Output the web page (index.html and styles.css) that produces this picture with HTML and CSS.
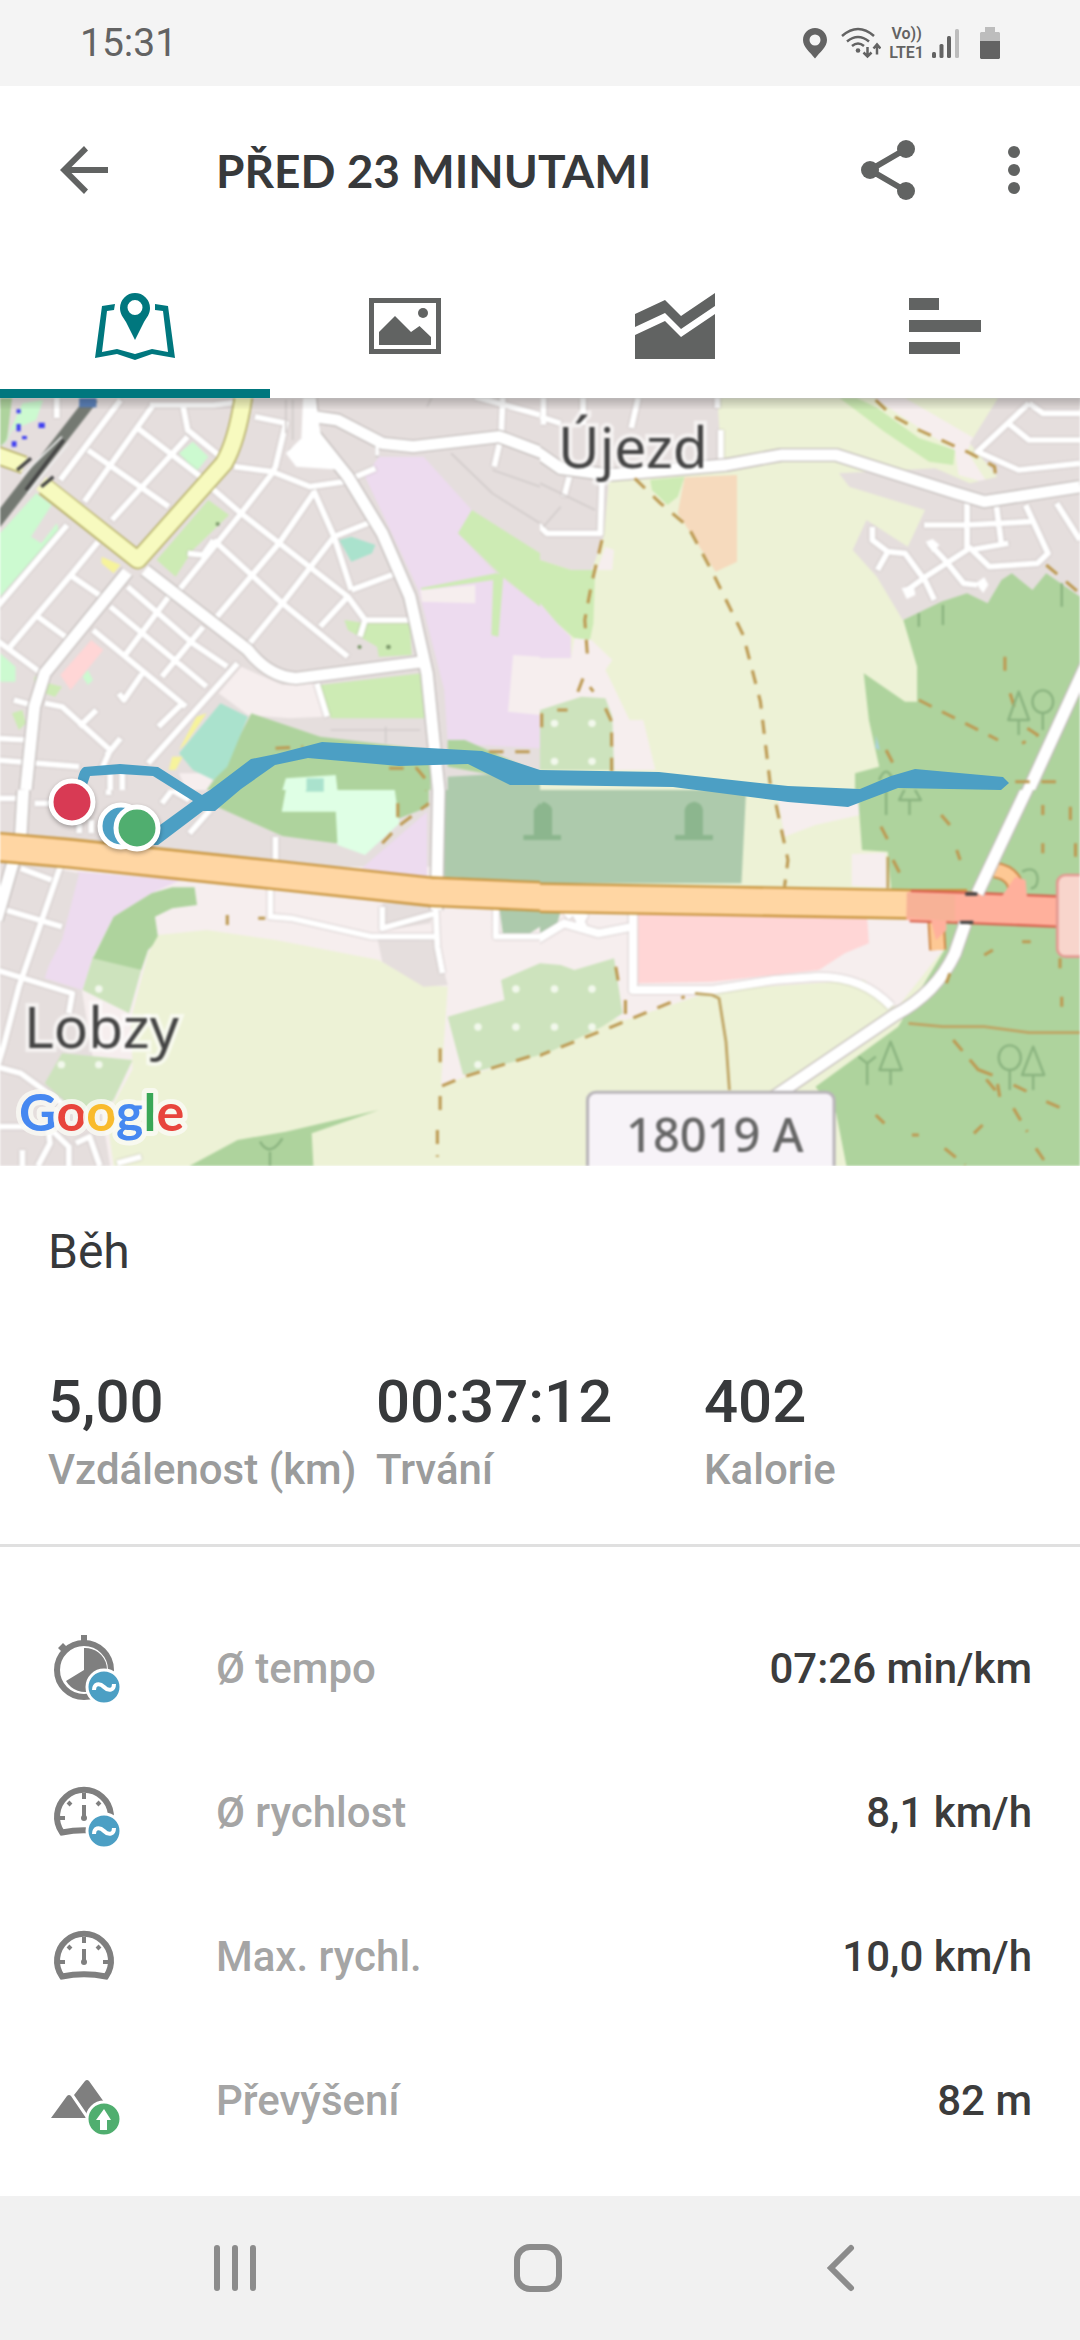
FILE: index.html
```html
<!DOCTYPE html>
<html lang="cs">
<head>
  <meta charset="utf-8">
  <meta name="viewport" content="width=device-width, initial-scale=1">
  <title>Před 23 minutami</title>
  <link rel="stylesheet" href="styles.css">
</head>
<body>
  <div class="status-bar">
    <span class="clock">15:31</span>
    <div class="status-icons">
      <svg width="24" height="32" viewBox="0 0 24 32"><path fill-rule="evenodd" d="M12 1C5.400 1 0 6 0 13c0 7 7 12 12 18.500C17 25 24 20 24 13 24 6 18.600 1 12 1zm0 6.500a5.500 5.500 0 1 1 0 11 5.500 5.500 0 0 1 0-11z"/></svg>
      <svg class="wifi" width="40" height="32" viewBox="0 0 40 32">
        <g class="line"><path d="M1 9Q17-5 33 9M6 14.500q11-9 22 0M11 19q6-5 12 0"/><path d="M26.500 20v9M22.500 25.500l4 4 4-4M36 27.500v-9M32.500 21.500l3.500-4 3.500 4"/></g>
        <circle cx="17" cy="23.500" r="2.300"/>
      </svg>
      <span class="network"><span>Vo))</span><span>LTE1</span></span>
      <svg width="28" height="32" viewBox="0 0 28 32"><rect y="25" width="4" height="6" rx="1.500"/><rect x="7.500" y="17" width="4" height="14" rx="1.500"/><rect x="15" y="9" width="4" height="22" rx="1.500"/><rect class="faint" x="23" y="2" width="4" height="29" rx="1.500"/></svg>
      <svg class="battery" width="20" height="32" viewBox="0 0 20 32"><path class="faint" d="M5 0h10v5h4l1 1v9H0V6l1-1h4z"/><path d="M0 14h20v17l-1 1H1l-1-1z"/></svg>
    </div>
  </div>

  <header class="app-bar">
    <button class="icon-button" aria-label="Zpět">
      <svg width="48" height="48" viewBox="0 0 48 48"><path d="M48 21H11.500L28 4.500 24 0 0 24l24 24 4-4.500L11.500 27H48z"/></svg>
    </button>
    <h1>PŘED 23 MINUTAMI</h1>
    <button class="icon-button" aria-label="Sdílet">
      <svg width="54" height="60" viewBox="0 0 54 60"><path class="share-line" d="M45 9L9 30l36 21"/><circle cx="45" cy="9" r="9"/><circle cx="9" cy="30" r="9"/><circle cx="45" cy="51" r="9"/></svg>
    </button>
    <button class="icon-button more" aria-label="Další možnosti">
      <svg width="12" height="48" viewBox="0 0 12 48"><circle cx="6" cy="6" r="6"/><circle cx="6" cy="24" r="6"/><circle cx="6" cy="42" r="6"/></svg>
    </button>
  </header>

  <nav class="tabs">
    <button class="tab active" aria-label="Mapa">
      <svg width="80" height="72" viewBox="0 0 80 72"><path d="M7 16l13-2-1 6-7 1-5 41 15-3 18 5 17-5 16 3-5-41-8-1v-6l13 2 7 52-23-4-17 6-18-6-22 4z"/><path fill-rule="evenodd" d="M40 3a15 15 0 0 0-15 15c0 6 3 9 6 14l9 18 9-18c3-5 6-8 6-14A15 15 0 0 0 40 3zm0 7a7.500 7.500 0 1 1 0 15 7.500 7.500 0 0 1 0-15z"/></svg>
    </button>
    <button class="tab" aria-label="Fotografie">
      <svg width="80" height="72" viewBox="0 0 80 72"><path fill-rule="evenodd" d="M4 8h72v56H4zm5 5v46h62V13z"/><path d="M14 42l16-16 16 16 8.500-6L66 47v8H14z"/><circle cx="58" cy="23" r="5"/></svg>
    </button>
    <button class="tab" aria-label="Grafy">
      <svg width="80" height="72" viewBox="0 0 80 72"><path d="M0 24l30-14 16 16L80 3v13L46 39 30 23 0 37zM0 45l30-14 16 16 34-23v45H0z"/></svg>
    </button>
    <button class="tab" aria-label="Mezičasy">
      <svg width="80" height="72" viewBox="0 0 80 72"><path d="M4 8h30v12H4zM4 30h72v12H4zM4 52h51v12H4z"/></svg>
    </button>
  </nav>

  <main>
    <div class="map">
      <svg class="map-canvas" viewBox="0 0 1080 768" role="img" aria-label="Mapa trasy">
        <defs>
          <linearGradient id="edge-shadow" x2="0" y2="1"><stop stop-color="#000" stop-opacity=".22"/><stop offset="1" stop-color="#000" stop-opacity="0"/></linearGradient>
        </defs>
        <g class="tiles">
          <!-- north west -->
          <svg x="0" y="0" width="540" height="392" viewBox="0 24 1568 1176" preserveAspectRatio="none">
            <rect class="urban" y="24" width="1568" height="1176"/>
            <path class="forest" d="M0 24h35L20 150 0 170z"/>
            <path class="park" d="M35 120l70-30 20-60-60 10-60 140zM0 430l105-120 45 35-60 95 30 20 45-60 5 20L0 620zM520 190l40-35 45 45-35 45zM0 790l45 40v45H0zM240 860l15-20 15 30-15 15z"/>
            <path class="meadow" d="M455 510l150-180 60 45-65 65-40 40-50 80zM1000 690l60 10 130 0 5 95-95 5-5-30-85-50zM930 885l295-35 7 135-270 0-32-55zM100 860l50-10-10 30 40 10-20 30-60-20zM35 970l30-10 10 40-20 20z"/>
            <path class="industry" d="M1060 260l40-60h130l140 160-40 70 110 120 128 100v425l-268-15-10-160-75-300z"/>
            <path class="meadow" d="M1370 360l198 130v160l-108-90-130-130zM1220 595l220-45 22 5-15 185-20-5 5-165-205 30z"/>
            <path class="pale" d="M1220 600l160-15v55l-155-5zM1490 795l78 5v175l-93-10zM700 830l120 55 90-5 20 60 10 40-100 5-120-10-85-65zM520 1150h110l-30 50h-60z"/>
            <path class="retail" d="M265 750l35 30-95 120-30-45z"/>
            <path class="forest" d="M730 970l200 70 320 40v120H600l50-70zM1300 1050h50l218 100v30l-268-50z"/>
            <path class="sport" d="M640 940l80 40-60 150-40 40-60-30-40-50zM985 450l35-10 70 25-10 25-60 25z"/>
            <path class="yellow" d="M295 500l55 25-20 25-35-30zM570 980l30-10-60 90-20 20zM500 1100l30 0-20 40-20 0z"/>
            <path class="cemetery" d="M1300 1160l268-15v55h-268z"/>
            <path class="pitch" d="M830 1165l145-10 5 45H820z"/><path class="sport" d="M890 1165h50v35h-50z"/>
            <path class="rail" d="M270 24L-20 410"/>
            <g id="nw-minor" class="ways"><path d="M-20 665l215-260M175 270L350 30M30 770l180-220 75-95M245 335L445 45M255 180l235 170M400 115l220 175M700 370l310 250 50 70h130M325 390l220-250M530 40l15 80 95 80M435 45h185l80-10M740 80l90 20-30 130-10 20-90 120-180 230M610 290l90 80M910 310L810 460 630 680M970 440L820 640l-95 120M1010 620l-80 90M680 230l110 15 110 45 100-15 90-40M910 300l60 140 50 160M970 440l110-45M1020 600l130-50M620 450l200 190 190 160M545 490l45 5 30-45M210 560l85 60M370 590l190 170 100 70M490 620L360 800M590 710L470 860M320 650l280 240M270 720l270 230M110 680l80 60M-10 750l130 100M690 820L430 1120M420 840l-60 90-15-20M530 940l-70 70M130 940l50 10 140 130-30 70M280 960l-50 50M350 1045l-40 50M-10 1110l240 20M-10 1045l90 5M40 930l70 20M1060 690l-15 50M1460 20l-5 120-20 90M1380 20l188 55M165 24v60M920 880l30 100M320 1130v70M355 1140v60"/></g>
            <use class="minor" href="#nw-minor"/>
            <g id="nw-major" class="ways"><path d="M370 545L130 850l-30 100-25 250M420 540l300 240q60 80 140 85l370-50M900 10l10 120 100 130 100 170 80 190 50 230 35 360M910 80l70 10 130 70 90 10 250-30 128 50M1090 180h10M850 195l60-40"/></g>
            <use class="casing" href="#nw-major"/><use class="major" href="#nw-major"/>
            <path class="plaza" d="M830 190l60-60 50 20 60 90-140-10zM880 24h35l20 130-60-10z"/>
            <path class="path-grey" d="M1310 190l120 120 138 90M1430 240l138 50M960 1020h260M1120 1010v50M850 30v120M830 30v100M1240 50l15-30"/>
            <path class="yellow-case" d="M-10 195l80 30M130 290l270 220L650 220q40-70 60-220"/>
            <path class="yellow-road" d="M-10 195l80 30M120 280l280 230L650 220q40-70 60-220"/>
            <path class="bridge" d="M50 240l40-35M120 290l35-30M75 300L185 150"/><path class="bridge-line" d="M60 260L180 140M80 310L200 160"/>
            <path class="blue" d="M48 58h12v12H48zM48 102h12v22H48zM112 98h18v16h-18zM34 154h14v16H34zM64 138h14v10H64z"/>
            <path class="stop" d="M230 24h50v28h-50z"/>
            <path class="dash" d="M800 1075l80-5M1130 1135h80l40 50M1420 1085h148"/>
            <g class="tree-dot"><circle cx="632" cy="402" r="6"/><circle cx="1128" cy="771" r="7"/><circle cx="1044" cy="771" r="6"/></g>
          </svg>

          <!-- north east -->
          <svg x="540" y="0" width="540" height="392" viewBox="0 24 1568 1176" preserveAspectRatio="none">
            <rect class="field" y="24" width="1568" height="1176"/>
            <path class="urban" d="M0 24h515l10 166 15 40-340 40-15 170-35 100H90L0 510z"/>
            <path class="meadow" d="M0 510l90 30h70l-5 160-10 50-45-5-50-45-50-60zM320 270l100-10-20 60-30 25-45-45zM870 24h50l60 30 120 90 105 36-5 45-70-10-130-90z"/>
            <path class="industry" d="M0 640l50 60 40 40v65H0z"/>
            <path class="pale" d="M0 805h90l10-60 50 5 60 60-20 30 10 20 60 130h40l35 150H0zM165 540l25-70 25 10-5 60zM970 24h90l200 120-20 40 60 96-85-25-10-75-80-50z"/>
            <path class="orchard" d="M0 960l120-40 70 5 20 55 5 160H0z"/>
            <path class="farm" d="M420 262l152-7v260l-62 30-110-175z"/>
            <path class="urban" d="M1330 24h238v600l-100-65-40 45-60-50-70 90-60-30-185 76-75-130-70-80 40-90 120 80 50-110-220-70-30-40 280-15 100 45 80-20-80-100z"/>
            <path class="forest" d="M1055 690l110-55 75-25 60 30 40-70 30-20 60 50 40-50 98 70v580H915v-50l70-20-30-140-15-140 120 85h35V830z"/>
            <path class="water" d="M975 1035l12 45-12-5z"/>
            <g id="ne-minor" class="ways"><path d="M10 24v80M0 80l60 20M125 24v80M285 24l-20 90M515 24v30M525 120v90M85 260l-15 60M180 270l-5 160H20l-30-30M965 410v40l45 35 50 5 60 85 25 55M1010 485l-30 55M1130 460l50 55 50 65 40 5M1240 340v140l-120 80-60 45M1115 405h120l190-10M1325 345l15 120M1410 345l65 145-30 30-140 10-60-60M1250 480l110-20M1500 340l68 110M1420 40l-150 145 120 55 178-20M1420 40l40 30h108M1360 100l60 50h148"/></g>
            <use class="minor" href="#ne-minor"/>
            <path class="plaza" d="M1050 595l35-10 5 30-25 12zM1265 580l25-18 12 22-15 25zM1120 455l20-8 20 18-20 22z"/>
            <g id="ne-major" class="ways"><path d="M-10 185l70 50 140 20 340-30 160-30h160l350 115 80 25 278-45M1610 770l-200 450"/></g>
            <use class="casing" href="#ne-major"/><use class="major" href="#ne-major"/>
            <path class="path-grey" d="M0 280l160 80M60 350l-50 60"/>
            <path class="dash" d="M180 450l-30 130-20 110 8 110M110 905l15-40 30 40M275 265l75 75 80 70 70 135 90 190 50 200 30 260M975 30l45 45 80 45 150 70 70 40 5 50M1100 930l230 120M1470 525l98 85M1350 800v50M1365 910l15 50M1415 1015l30 20-45 25M1005 1080l20 40M190 955l18 40v160M5 970v60M50 960h30M1380 1175h150"/>
            <g class="dots"><circle cx="42" cy="1000" r="11"/><circle cx="151" cy="1000" r="11"/><circle cx="42" cy="1114" r="11"/><circle cx="151" cy="1114" r="11"/></g>
            <g class="tree"><path d="M1100 670v40M1170 645v60M1515 580v70M1390 1035v-45M1390 905l-30 85h60zM1460 1020v-50M985 1170q20-50 40 0"/><ellipse cx="1460" cy="935" rx="30" ry="34"/></g>
          </svg>

          <!-- south west -->
          <svg x="0" y="392" width="540" height="376" viewBox="0 30 1568 1128" preserveAspectRatio="none">
            <rect class="urban" width="1568" height="1158"/>
            <path class="pale" d="M180 260h1388v898H320z"/>
            <path class="forest" d="M630 80l50-80h565v80l-270 110-155-22z"/>
            <path class="pitch" d="M818 95L835 0h140l5 25 165-5 15 110-100 95-80-30-5-100z"/><path class="sport" d="M888 0h52v35h-52z"/>
            <path class="industry" d="M1050 265l190-170v205z"/>
            <path class="cemetery" d="M1290 0h278v310l-278-20zM1450 380h118v60l-30 20h-78z"/>
            <path class="industry" d="M225 275l300 25-85 40-110 70-60 120-30 100-110-35z"/>
            <path class="orchard" d="M270 530l140 40-35 130-135-70zM180 820l205 20-55 120-80 60-120-110z"/>
            <path class="forest" d="M330 410l110-70 60-18h65l7 53-72 10-50 25 10 70-30 30-20 60-140-35z"/>
            <path class="field" d="M460 465l140-15 200 30 300 60 130 75 70 5-20 300 70-30 218-70v338H330l-20-150 75-140-5-150 50-198z"/>
            <path class="urban" d="M1095 470l170 10 35 135-70 5-120-75zM1110 370h150l-10 60-130 20zM180 270l50 10-50 200-60 120z"/>
            <path class="orchard" d="M1455 600l113-50v275l-223 60-45-175 165-50z"/>
            <path class="forest" d="M550 1158l140-78 140-25 270-65-195 70 5 98z"/>
            <g id="sw-minor" class="ways"><path d="M40 250L-20 440M175 260l-60 180L55 620 10 800-20 900M60 265l90 35M0 385l180 55M-10 570l220 70-10 60M800 170v80M785 320v90l60 5 235 55h185M1265 380l5 120 15 80M1110 380v65l155-45M1440 385v85h128M550 160l60-70M315 0v45M470 70l30-40 50 30M100 70h60M0 55h60M230 130v30M265 120v40M-10 860l70 20 120 90M0 1040h140l5 50-35 68M140 1040l60 60v58M220 1090l40-20 30 88M340 1150l70-20M65 1110v48"/></g>
            <use class="minor" href="#sw-minor"/>
            <g id="sw-major" class="ways"><path d="M70-10l-10 180M1275-10l-8 400M40 240L-10 420"/></g>
            <use class="casing" href="#sw-major"/><use class="major" href="#sw-major"/>
            <path class="trunk-case" d="M-20 200l220 20 600 65 450 50 338 15"/><path class="trunk" d="M-20 200l220 20 600 65 450 50 338 15"/>
            <path class="dash" d="M1210 0l35 35M1110 190l45-50 90-70M1155 70v70M660 405v30M750 415h20M1278 805v60M1278 990v-70l70-30 220-70M1270 1050v80"/>
            <g class="dots"><circle cx="287" cy="627" r="11"/><circle cx="178" cy="854" r="11"/><circle cx="287" cy="854" r="11"/><circle cx="1498" cy="627" r="11"/><circle cx="1388" cy="741" r="11"/><circle cx="1498" cy="741" r="11"/><circle cx="1388" cy="854" r="11"/></g>
            <path class="tree" d="M755 1085q28 50 65-10M784 1115v50"/>
            <path class="grave" d="M1520 165h48v15h-48zM1550 165V90l18-22v97z"/>
          </svg>

          <!-- south east -->
          <svg x="540" y="392" width="540" height="376" viewBox="0 30 1568 1128" preserveAspectRatio="none">
            <rect class="field" width="1568" height="1158"/>
            <path class="cemetery" d="M0 0h600l-15 310H0z"/>
            <path class="pale" d="M690 50L890 0h30l10 105-130 30-90 35zM0 380l1130 40 30 90-130 170-90-80-430 30-260 90L0 700z"/>
            <path class="cemetery" d="M0 395h60l-10 35-50 30z"/>
            <path class="retail" d="M285 400l665 15 5 75-70 30-75 50-310 35-215 5z"/>
            <path class="orchard" d="M0 550l60 5 40 15 115-35 25 165-60 40-180 90z"/>
            <path class="forest" d="M920 0h648v1158H890l-30-158-60-80 240-180 140-240-160-170-10-115-75-5z"/>
            <path class="pale" d="M905 222l98-4 5 105-103-5zM960 415l170 5 40 90-130 170-70-60z"/>
            <g id="se-minor" class="ways"><path d="M-10 480l80-50 100 30 100-20M270 395v235h230l180-30 130-10q130 0 210 90M130 400l-20 40M75 410l25-20 30 60"/></g>
            <use class="minor wide" href="#se-minor"/>
            <path class="trunk-case" d="M-10 353l560 10 530 10h160"/><path class="trunk" d="M-10 353l560 10 530 10h160"/>
            <path class="ramp-case" d="M1320 270q70 10 65 90M1155 510l-5-90"/><path class="ramp" d="M1320 270q70 10 65 90M1155 510l-5-90"/>
            <path class="motor-case" d="M1075 378l150 5 290 12"/><path class="motor" d="M1065 378l160 5 290 12"/>
            <path class="motor-fill" d="M1340 350l40-60 30 10 5 60zM1130 400h50v50l-30 30z"/><path class="motor-end" d="M1065 340l140 5v80l-140-15z"/>
            <g id="se-major" class="ways"><path d="M1440-30L1270 340M1235 430l-30 90q-55 120-175 185L680 950"/></g>
            <use class="casing" href="#se-major"/><use class="major" href="#se-major"/>
            <path class="bridge" d="M1235 342h35M1220 427h38"/>
            <path class="dash" d="M670 0l50 240-10 80M1165 105l25 30M990 140l20 40M1460 75v30M1540 80v40M1460 190v30M1555 190v40M1210 210l10 30M1025 240l25 50M1510 535v30M1515 650v30M1290 525l25-15M1400 485h25M1180 610l10-30M1200 780l130 160M1275 870l50 20 10 60M1375 915l40 20M1470 965l45 20M1375 985l40 70M975 1005l25 25M1080 1065h20M1260 1060l25-25M1175 1105l60 50M1440 1105l35 53M220 560l10 60M-10 830l220-90 210-90M248 660v60"/>
            <path class="track" d="M450 640l50 5 20 10 20 130 10 145M1070 730l100 10h120l130 18h148M1010 230v95"/>
            <g class="dots"><circle cx="42" cy="627" r="11"/><circle cx="151" cy="627" r="11"/><circle cx="42" cy="741" r="11"/><circle cx="151" cy="741" r="11"/></g>
            <path class="grave" d="M-25 165h86v15h-86zM-5 165V80l15-15q25 10 25 25v75zM392 165h110v15H392zM420 165V90q5-22 28-25 22 3 25 25v75z"/>
            <g class="tree"><path d="M1005 30v75M1073 105V60h-30l25-50h10l28 50h-32M950 915v-65l-25-20M950 850l25-20M1018 915v-45M1018 785l-32 85h64zM1364 930v-60M1432 930v-45M1432 800l-32 85h64zM1400 275q40-20 45 20 0 30-20 30"/><ellipse cx="1364" cy="833" rx="32" ry="37"/></g>
            <rect class="motor-sign" x="1502" y="285" width="120" height="245" rx="24"/>
            <rect class="sign" x="138" y="937" width="716" height="300" rx="24"/>
          </svg>

          <g class="places">
            <text x="558" y="70">Újezd</text>
            <text x="24" y="650">Lobzy</text>
            <text class="sign-text" x="626" y="754">18019 A</text>
          </g>
        </g>
        <rect width="1080" height="12" fill="url(#edge-shadow)"/>

        <g class="route">
          <path d="M77 392l1-12q2-9 6-11l36-3 38 3 44 28 8-5 41-31 25-5 46-12 160 9 58 19 119 2 129 14 72 3 31-13 24-7 88 8 6 6-8 7-103-2-50 19-60-5-115-15-133-2h-30l-42-21-69 2-91-8-33 7-34 24-26 22h-12l-45 34h-8l-4-7 14-13 33-24-40-25-33-2-30 2-4 12z"/>
        </g>
        <g class="markers">
          <circle class="red" cx="72" cy="404" r="21"/>
          <circle class="blue-dot" cx="121" cy="428" r="21"/>
          <circle class="green" cx="137" cy="430" r="21"/>
        </g>
        <text class="attribution" x="19" y="733"><tspan fill="#4688f1">G</tspan><tspan fill="#e8453c">o</tspan><tspan fill="#f9bb2d">o</tspan><tspan fill="#4688f1">g</tspan><tspan fill="#3aa757">l</tspan><tspan fill="#e8453c">e</tspan></text>
      </svg>
    </div>

    <section class="summary">
      <h2>Běh</h2>
      <dl class="totals">
        <div><dd>5,00</dd><dt>Vzdálenost (km)</dt></div>
        <div><dd>00:37:12</dd><dt>Trvání</dt></div>
        <div><dd>402</dd><dt>Kalorie</dt></div>
      </dl>
    </section>

    <dl class="metrics">
      <div class="metric">
        <svg width="72" height="72" viewBox="0 0 72 72">
          <circle class="ring" cx="36" cy="38" r="27"/><path d="M33 3h6v7h-6zM10 16l5-5 4 4-5 5zM36 38V16a22 22 0 1 1-18 33z"/>
          <circle class="badge" cx="56" cy="55" r="17"/><path class="tilde" d="M46 58c0-6 5-8 10-3s10 3 10-3"/>
        </svg>
        <dt>Ø tempo</dt><dd>07:26 min/km</dd>
      </div>
      <div class="metric">
        <svg width="72" height="72" viewBox="0 0 72 72">
          <path class="ring" d="M14 56.500a27 27 0 1 1 44 0Q36 52 14 56.500z"/><path class="tick" d="M36 17v6M12 42h5M20 26l3 3M52 26l-3 3M60 42h-5M36 29v13"/><circle cx="36" cy="42" r="3"/>
          <circle class="badge" cx="56" cy="55" r="17"/><path class="tilde" d="M46 58c0-6 5-8 10-3s10 3 10-3"/>
        </svg>
        <dt>Ø rychlost</dt><dd>8,1 km/h</dd>
      </div>
      <div class="metric">
        <svg width="72" height="72" viewBox="0 0 72 72">
          <path class="ring" d="M14 56.500a27 27 0 1 1 44 0Q36 52 14 56.500z"/><path class="tick" d="M36 17v6M12 42h5M20 26l3 3M52 26l-3 3M60 42h-5M36 29v13"/><circle cx="36" cy="42" r="3"/>
        </svg>
        <dt>Max. rychl.</dt><dd>10,0 km/h</dd>
      </div>
      <div class="metric">
        <svg width="72" height="72" viewBox="0 0 72 72">
          <path d="M3 54l16-22q2-2 4 0l15 22zM26 31l11-14q2-2 4 0l15 21-17 12z"/>
          <circle class="badge up" cx="56" cy="55" r="17"/><path class="arrow" d="M56 45l7 11h-4v10h-7V56h-4z"/>
        </svg>
        <dt>Převýšení</dt><dd>82 m</dd>
      </div>
    </dl>
  </main>

  <nav class="system-nav">
    <button aria-label="Poslední aplikace"><svg width="48" height="48" viewBox="0 0 48 48"><path d="M6 4v40M24 4v40M42 4v40"/></svg></button>
    <button aria-label="Domů"><svg width="48" height="48" viewBox="0 0 48 48"><rect x="3" y="3" width="42" height="42" rx="13"/></svg></button>
    <button aria-label="Zpět"><svg width="48" height="48" viewBox="0 0 48 48"><path d="M34 4L14 24l20 20"/></svg></button>
  </nav>
</body>
</html>
```

FILE: styles.css
```css
:root {
  --teal: #00777e;
  --icon: #616362;
  --text: #37393b;
  --muted: #9b9c9c;
  --metric-label: #a5a5a5;
  --metric-icon: #7f7f7f;
  --route: #4c9fc4;
  --green: #50ae6f;
}

* {
  box-sizing: border-box;
}

body {
  margin: 0;
  min-height: 100vh;
  display: flex;
  flex-direction: column;
  background: #fff;
  color: var(--text);
  font-family: Roboto, "Noto Sans", sans-serif;
}

button {
  padding: 0;
  border: 0;
  background: none;
  cursor: pointer;
}

svg {
  display: block;
}

h1, h2, dl, dt, dd {
  margin: 0;
}

/* Status bar */
.status-bar {
  display: flex;
  justify-content: space-between;
  align-items: center;
  height: 86px;
  padding: 0 80px;
  background: #f4f4f4;
  color: #636363;
}

.clock {
  font-size: 39px;
}

.status-icons {
  display: flex;
  align-items: center;
  gap: 8px;
  fill: #636363;
}

.wifi {
  margin-left: 6px;
}

.wifi .line {
  fill: none;
  stroke: #636363;
  stroke-width: 2.5;
}

.battery {
  margin-left: 12px;
}

.faint {
  fill: #bdbdbd;
}

.network {
  display: flex;
  flex-direction: column;
  align-items: center;
  font-size: 16px;
  font-weight: 600;
  line-height: 19px;
}

/* App bar */
.app-bar {
  display: flex;
  align-items: center;
  height: 168px;
  padding: 0 30px 0 48px;
}

.app-bar h1 {
  flex: 1;
  margin-left: 96px;
  font-family: Lato, sans-serif;
  font-size: 46px;
  font-weight: 700;
}

.icon-button {
  display: flex;
  justify-content: center;
  align-items: center;
  width: 72px;
  height: 72px;
  fill: var(--icon);
}

.icon-button.more {
  margin-left: 54px;
}

.share-line {
  fill: none;
  stroke: var(--icon);
  stroke-width: 6;
}

.tabs {
  display: grid;
  grid-template-columns: repeat(4, 1fr);
  height: 144px;
}

.tab {
  display: flex;
  justify-content: center;
  align-items: center;
  fill: var(--icon);
}

.tab.active {
  fill: var(--teal);
  box-shadow: inset 0 -9px var(--teal);
}

/* Map */
.map-canvas {
  width: 100%;
  height: auto;
}

.tiles { filter: blur(1px); }
.tiles path { stroke-linejoin: round; }

.urban { fill: #e5dedd; }
.pale { fill: #f6eeee; }
.field { fill: #edf2d6; }
.forest { fill: #aed39d; }
.meadow { fill: #cdebb4; }
.park { fill: #ccfad0; }
.orchard { fill: #cde3bd; }
.cemetery { fill: #adcaac; }
.industry { fill: #eddbef; }
.retail { fill: #ffd6d6; }
.sport { fill: #aae2cd; }
.pitch { fill: #dfffe5; }
.farm { fill: #f6dabd; }
.yellow { fill: #f6f39c; }
.water { fill: #aad3df; }
.plaza { fill: #fff; }
.blue { fill: #4040f0; }
.stop { fill: #5b80b8; }
.grave { fill: #8cb68e; }

.ways, .rail, .path-grey, .yellow-case, .yellow-road, .bridge, .bridge-line,
.dash, .track, .trunk, .trunk-case, .motor, .motor-case, .ramp, .ramp-case, .tree {
  fill: none;
}

.minor { stroke: #fff; stroke-width: 17; filter: drop-shadow(0 0 3px #b9b2b1); }
.minor.wide { stroke-width: 24; }
.casing { stroke: #c3bdbb; stroke-width: 42; }
.major { stroke: #fff; stroke-width: 34; }
.rail { stroke: #747972; stroke-width: 34; }
.path-grey { stroke: #d2cccb; stroke-width: 5; }
.yellow-case { stroke: #b5ae63; stroke-width: 56; }
.yellow-road { stroke: #f7fabf; stroke-width: 47; }
.bridge { stroke: #444; stroke-width: 10; }
.bridge-line { stroke: #eee; stroke-width: 5; }
.dash { stroke: #bd9a53; stroke-width: 9; stroke-dasharray: 42 34; }
.track { stroke: #bfa463; stroke-width: 8; }
.trunk-case { stroke: #c9963f; stroke-width: 92; }
.trunk { stroke: #ffd6a3; stroke-width: 78; }
.ramp-case { stroke: #cf8a4a; stroke-width: 50; }
.ramp { stroke: #fdc894; stroke-width: 38; }
.motor-case { stroke: #d9634f; stroke-width: 98; }
.motor { stroke: #ffb09c; stroke-width: 84; }
.motor-fill { fill: #ffb09c; }
.motor-end { fill: #f7b297; }
.motor-sign { fill: #f8d5cc; stroke: #e39a92; stroke-width: 8; }
.sign { fill: #f7f3f8; stroke: #b9b5b9; stroke-width: 9; }
.tree { stroke: #8bb480; stroke-width: 7; }
.tree-dot { fill: #7d9a6c; }
.dots { fill: #f2f8ec; }

.places {
  fill: #444;
  stroke: rgba(255, 255, 255, 0.6);
  stroke-width: 8px;
  paint-order: stroke;
  font-family: "Noto Sans", sans-serif;
  font-size: 57px;
}

.places .sign-text {
  stroke: none;
  fill: #666;
  font-size: 47px;
  font-weight: 500;
}

.route { fill: var(--route); }
.markers { stroke: #fff; stroke-width: 5; filter: drop-shadow(0 2px 2px rgba(0, 0, 0, 0.3)); }
.red { fill: #d83a54; }
.blue-dot { fill: var(--route); }
.green { fill: var(--green); }

.attribution {
  font-family: Lato, sans-serif;
  font-size: 52px;
  font-weight: 700;
  stroke: rgba(250, 250, 245, 0.8);
  stroke-width: 10px;
  stroke-linejoin: round;
  paint-order: stroke;
}

/* Summary */
.summary {
  padding: 50px 48px 42px;
  border-bottom: 3px solid #e0e0e0;
}

.summary h2 {
  font-size: 48px;
  font-weight: 400;
  line-height: 72px;
}

.totals {
  display: grid;
  grid-template-columns: repeat(3, 1fr);
  margin-top: 78px;
}

.totals dd {
  font-size: 60px;
  font-weight: 500;
  line-height: 72px;
}

.totals dt {
  color: var(--muted);
  font-size: 42px;
  font-weight: 500;
  line-height: 64px;
  white-space: nowrap;
}

/* Metrics */
.metrics {
  padding: 49px 48px 24px;
}

.metric {
  display: flex;
  align-items: center;
  height: 144px;
  font-size: 42px;
  font-weight: 500;
}

.metric svg { fill: var(--metric-icon); }

.metric dt {
  margin-left: 96px;
  color: var(--metric-label);
}

.metric dd {
  margin-left: auto;
  color: #3c3c3c;
}

.ring {
  fill: none;
  stroke: var(--metric-icon);
  stroke-width: 6;
}

.tick { stroke: var(--metric-icon); stroke-width: 4; }
.badge { fill: var(--route); stroke: #fff; stroke-width: 3; }
.badge.up { fill: var(--green); }
.metric .tilde { fill: none; stroke: #fff; stroke-width: 4; }
.arrow { fill: #fff; }

/* Android navigation */
.system-nav {
  display: grid;
  grid-template-columns: repeat(3, 1fr);
  height: 144px;
  margin-top: auto;
  padding: 0 88px 0 84px;
  background: #f1f1f1;
}

.system-nav button {
  display: flex;
  justify-content: center;
  align-items: center;
}

.system-nav svg {
  fill: none;
  stroke: #8c8c8c;
  stroke-width: 6;
  stroke-linecap: round;
}
```
